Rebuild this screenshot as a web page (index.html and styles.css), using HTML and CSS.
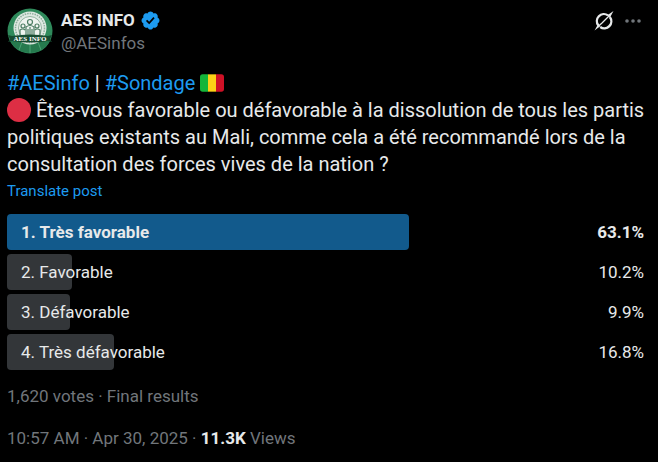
FILE: index.html
```html
<!DOCTYPE html>
<html lang="fr">
<head>
    <meta charset="UTF-8">
    <title>AES INFO</title>
    <link rel="stylesheet" href="styles.css">
</head>

<body>
<article class="post">
    <header class="head">
        <svg class="avatar" viewBox="0 0 46 46" aria-hidden="true">
            <circle cx="23" cy="23" r="22.5" fill="#2f8a5b"/>
            <path d="M3 33Q23 27 43 33Q36 45 23 45Q10 45 3 33z" fill="#267a4e"/>
            <path d="M23 32V45M15 34L12 42M31 34L34 42" stroke="#4aa374" fill="none"/>
            <circle cx="23" cy="20" r="16.5" fill="#dfe9e2"/>
            <circle cx="23" cy="20" r="14.5" fill="none" stroke="#8fae9c" stroke-width="1.5" stroke-dasharray="1.5 1"/>
            <circle cx="23" cy="20" r="11.5" fill="#eef3ef" stroke="#7da58d" stroke-width=".8"/>
            <g fill="none" stroke="#4c7d63" stroke-width="1.2">
                <circle cx="23" cy="14" r="2.5"/>
                <circle cx="16" cy="18" r="2"/>
                <circle cx="30" cy="18" r="2"/>
                <path d="M19 27V19Q23 16 27 19V27M13 27V22Q16 20 18 22M33 27V22Q30 20 28 22M23 19V27M21 21V27M25 21V27"/>
            </g>
            <path d="M1 27L5 28Q23 25 41 28L45 27L43 31L45 34L41 33Q23 36 5 33L1 34L3 31z" fill="#174c31"/>
            <text class="avatar-text" x="23" y="33" text-anchor="middle">AES INFO</text>
        </svg>
        <div class="names">
            <div class="name">
                <a href="#">AES INFO</a>
                <svg class="verified" viewBox="0 0 22 22" role="img" aria-label="Verified account">
                    <path fill="#1d9bf0" d="M20.396 11c-.018-.646-.215-1.275-.57-1.816-.354-.54-.852-.972-1.438-1.246.223-.607.27-1.264.14-1.897-.131-.634-.437-1.218-.882-1.687-.47-.445-1.053-.75-1.687-.882-.633-.13-1.29-.083-1.897.14-.273-.587-.704-1.086-1.245-1.44S11.647 1.62 11 1.604c-.646.017-1.273.213-1.813.568s-.969.854-1.24 1.44c-.608-.223-1.267-.272-1.902-.14-.635.13-1.22.436-1.69.882-.445.47-.749 1.055-.878 1.688-.13.633-.08 1.29.144 1.896-.587.274-1.087.705-1.443 1.245-.356.54-.555 1.17-.574 1.817.02.647.218 1.276.574 1.817.356.54.856.972 1.443 1.245-.224.606-.274 1.263-.144 1.896.13.634.433 1.218.877 1.688.47.443 1.054.747 1.687.878.633.132 1.29.084 1.897-.136.274.586.705 1.084 1.246 1.439.54.354 1.17.551 1.816.569.647-.016 1.276-.213 1.817-.567s.972-.854 1.245-1.44c.604.239 1.266.296 1.903.164.636-.132 1.22-.447 1.68-.907.46-.46.776-1.044.908-1.681s.075-1.299-.165-1.903c.586-.274 1.084-.705 1.439-1.246.354-.54.551-1.17.569-1.816z"/>
                    <path fill="#000" d="M9.662 14.85l-3.429-3.428 1.293-1.302 2.072 2.072 4.4-4.794 1.347 1.246z"/>
                </svg>
            </div>
            <a class="handle" href="#">@AESinfos</a>
        </div>
        <div class="actions">
            <button class="icon-btn" type="button" aria-label="Grok">
                <svg width="20" height="22" viewBox="0 0 20 22" fill="none">
                    <path d="M14 5.4A7 7 0 0 0 4.4 15.4M6.2 17A7 7 0 0 0 15.8 7" stroke="#e7e9ea" stroke-width="2.4"/>
                    <path d="M.5 20.5L4 14.5L6.5 16zM19.5 1L16 7.5L13 5.5z" fill="#e7e9ea"/>
                    <path d="M3 17.5L8 13L16 5" stroke="#e7e9ea" stroke-width="1.3"/>
                </svg>
            </button>
            <button class="icon-btn" type="button" aria-label="More">
                <svg width="16" height="4" viewBox="0 0 16 4" fill="#71767b">
                    <circle cx="2" cy="2" r="1.8"/>
                    <circle cx="8" cy="2" r="1.8"/>
                    <circle cx="14" cy="2" r="1.8"/>
                </svg>
            </button>
        </div>
    </header>

    <p class="text">
        <a href="#">#AESinfo</a> | <a href="#">#Sondage</a>
        <svg class="emoji" viewBox="0 0 36 36" role="img" aria-label="Mali">
            <path fill="#14b53a" d="M4 5a4 4 0 0 0-4 4v18a4 4 0 0 0 4 4h8V5z"/>
            <path fill="#fcd116" d="M12 5h12v26H12z"/>
            <path fill="#ce1126" d="M32 5h-8v26h8a4 4 0 0 0 4-4V9a4 4 0 0 0-4-4z"/>
        </svg><br>
        <svg class="emoji" viewBox="0 0 36 36" aria-hidden="true"><circle cx="18" cy="18" r="18" fill="#dd2e44"/></svg>
        Êtes-vous favorable ou défavorable à la dissolution de tous les partis politiques existants au Mali, comme cela a été recommandé lors de la consultation des forces vives de la nation ?
    </p>
    <button class="translate" type="button">Translate post</button>

    <ul class="poll">
        <li class="win">
            <div class="bar" style="width: 63.1%"></div>
            <span>1. Très favorable</span>
            <span>63.1%</span>
        </li>
        <li>
            <div class="bar" style="width: 10.2%"></div>
            <span>2. Favorable</span>
            <span>10.2%</span>
        </li>
        <li>
            <div class="bar" style="width: 9.9%"></div>
            <span>3. Défavorable</span>
            <span>9.9%</span>
        </li>
        <li>
            <div class="bar" style="width: 16.8%"></div>
            <span>4. Très défavorable</span>
            <span>16.8%</span>
        </li>
    </ul>

    <div class="meta">1,620 votes · Final results</div>
    <div class="meta"><a href="#">10:57 AM · Apr 30, 2025</a> · <b>11.3K</b> Views</div>
</article>
</body>
</html>
```

FILE: styles.css
```css
* {
    margin: 0;
    padding: 0;
    box-sizing: border-box;
}

body {
    background: #000;
    color: #e7e9ea;
    font-family: Roboto, "Liberation Sans", sans-serif;
    font-size: 17px;
}

a {
    color: inherit;
    text-decoration: none;
}

ul {
    list-style: none;
}

button {
    background: none;
    border: 0;
    font: inherit;
    cursor: pointer;
}

.post {
    padding: 8px 7px;
}

.head {
    display: flex;
    gap: 8px;
}

.avatar {
    width: 46px;
    height: 46px;
}

.avatar-text {
    font: bold 7px "Liberation Serif", serif;
    fill: #fff;
}

.names {
    flex: 1;
    padding-top: 1px;
    line-height: 23px;
}

.name {
    display: flex;
    align-items: center;
    gap: 5px;
    font-weight: bold;
}

.verified {
    width: 21px;
    height: 21px;
}

.handle {
    color: #71767b;
}

.actions {
    display: flex;
    align-items: center;
    gap: 11px;
    height: 25px;
    padding-right: 10px;
}

.icon-btn svg {
    display: block;
}

.text {
    margin-top: 15px;
    font-size: 20px;
    line-height: 27px;
}

.text a {
    color: #1d9bf0;
}

.emoji {
    width: 24px;
    height: 24px;
    vertical-align: -5px;
}

.translate {
    display: block;
    color: #1d9bf0;
    font-size: 15px;
    line-height: 26px;
}

.poll {
    display: flex;
    flex-direction: column;
    gap: 4px;
    margin-top: 10px;
    margin-right: 7px;
}

.poll li {
    display: flex;
    justify-content: space-between;
    position: relative;
    padding-left: 14px;
    line-height: 36px;
}

.poll span {
    position: relative;
}

/* result bar lies under the label */
.bar {
    position: absolute;
    left: 0;
    top: 0;
    height: 100%;
    border-radius: 4px;
    background: #333639;
}

.win {
    font-weight: bold;
}

.win .bar {
    background: #125a8c;
}

.meta {
    margin-top: 15px;
    line-height: 22px;
    color: #71767b;
}

.meta + .meta {
    margin-top: 20px;
}

.meta b {
    color: #e7e9ea;
}
```
